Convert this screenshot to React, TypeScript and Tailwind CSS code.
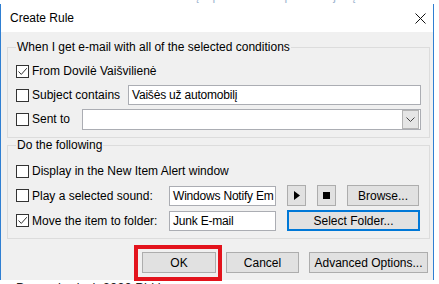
import React from 'react';

const font = { fontFamily: '"Liberation Sans", Arial, sans-serif' };

function Check({ on }: { on?: boolean }) {
  return (
    <span className="w-[13px] h-[13px] shrink-0 border border-[#333333] bg-white flex items-center justify-center">
      {on && (
        <svg width="11" height="11" viewBox="0 0 11 11" fill="none" aria-hidden>
          <path d="M1.5 5.5 L4.3 8.4 L9.8 2.2" stroke="#333" strokeWidth="1" />
        </svg>
      )}
    </span>
  );
}

function Field({ className, children }: { className: string; children?: React.ReactNode }) {
  return (
    <div className={`h-[20px] border border-[#abadb3] bg-white flex items-center px-[3px] text-[12px] tracking-[-0.2px] text-black whitespace-nowrap overflow-hidden ${className}`}>
      {children}
    </div>
  );
}

function Btn({ className, children, focus }: { className: string; children?: React.ReactNode; focus?: boolean }) {
  return (
    <button
      className={`h-[21px] bg-[#e1e1e1] flex items-center justify-center text-[12px] text-black ${
        focus ? 'border-2 border-[#0078d7]' : 'border border-[#adadad]'
      } ${className}`}
    >
      {children}
    </button>
  );
}

export default function App() {
  return (
    <div className="w-[439px] h-[284px] bg-white overflow-hidden flex flex-col" style={font}>
      {/* window behind the dialog */}
      <div className="h-[4px] overflow-hidden">
        <div className="-mt-[10px] ml-[90px] text-[12px] leading-[12px] text-[#9db4cf] whitespace-nowrap">
          Vaišės už automobilį – pranešimas apie mokėjimą
        </div>
      </div>

      <div className="w-[434px] h-[276px] border-x border-[#2f7fd2] bg-[#f0f0f0] flex flex-col">
        {/* title bar */}
        <div className="h-[28px] bg-white flex items-center justify-between pl-[9px] pr-[7px]">
          <span className="text-[12px] text-black">Create Rule</span>
          <svg width="11" height="11" viewBox="0 0 11 11" aria-hidden>
            <path d="M0.5 0.5 L10.5 10.5 M10.5 0.5 L0.5 10.5" stroke="#111" strokeWidth="1" />
          </svg>
        </div>

        <div className="flex flex-col pl-[6px] pr-[3px] text-[12px] text-black">
          {/* conditions */}
          <fieldset className="mt-[7px] border border-[#dcdcdc] px-[8px] pb-[6px]">
            <legend className="px-[1px] leading-[16px]">When I get e-mail with all of the selected conditions</legend>
            <div className="h-[24px] mt-[4px] flex items-center gap-[3px]">
              <Check on />
              <span>From Dovilė Vaišvilienė</span>
            </div>
            <div className="h-[24px] flex items-center">
              <Check />
              <span className="ml-[3px] w-[96px]">Subject contains</span>
              <Field className="flex-1">Vaišės už automobilį</Field>
            </div>
            <div className="h-[24px] flex items-center">
              <Check />
              <span className="ml-[3px] w-[50px]">Sent to</span>
              <div className="flex-1 h-[21px] border border-[#abadb3] bg-white flex justify-end items-center pr-[1px]">
                <span className="w-[17px] h-[19px] bg-[#e5e5e5] border border-[#b4b4b4] flex items-center justify-center">
                  <svg width="9" height="5" viewBox="0 0 9 5" fill="none" aria-hidden>
                    <path d="M0.5 0.5 L4.5 4.5 L8.5 0.5" stroke="#444" strokeWidth="1" />
                  </svg>
                </span>
              </div>
            </div>
          </fieldset>

          {/* actions */}
          <fieldset className="-mt-[1px] border border-[#dcdcdc] pl-[8px] pr-[9px] pb-[5px]">
            <legend className="px-[1px] leading-[16px]">Do the following</legend>
            <div className="h-[24px] mt-[6px] flex items-center gap-[3px]">
              <Check />
              <span>Display in the New Item Alert window</span>
            </div>
            <div className="h-[25px] flex items-center">
              <Check />
              <span className="ml-[3px] w-[137px]">Play a selected sound:</span>
              <Field className="w-[107px]">Windows Notify Em</Field>
              <Btn className="w-[19px] ml-[11px]">
                <svg width="6" height="9" viewBox="0 0 6 9" aria-hidden>
                  <path d="M0 0 L6 4.5 L0 9 Z" fill="#000" />
                </svg>
              </Btn>
              <Btn className="w-[19px] ml-[11px]">
                <span className="w-[7px] h-[7px] bg-black" />
              </Btn>
              <Btn className="w-[72px] ml-[11px]">Browse...</Btn>
            </div>
            <div className="h-[25px] flex items-center">
              <Check on />
              <span className="ml-[3px] w-[137px]">Move the item to folder:</span>
              <Field className="w-[107px]">Junk E-mail</Field>
              <Btn focus className="flex-1 ml-[11px]">Select Folder...</Btn>
            </div>
          </fieldset>

          {/* dialog buttons */}
          <div className="mt-[13px] flex justify-end gap-[10px] pr-[2px]">
            <div className="relative">
              <Btn className="w-[74px]">OK</Btn>
              <div className="absolute -left-[8px] -right-[6px] -top-[7px] -bottom-[8px] border-[4px] border-[#e3131c]" />
            </div>
            <Btn className="w-[73px]">Cancel</Btn>
            <Btn className="w-[119px]">Advanced Options...</Btn>
          </div>
        </div>
      </div>

      {/* window behind, below the dialog */}
      <div className="h-[4px] overflow-hidden">
        <div className="mt-[1px] ml-[16px] text-[13px] leading-[14px] text-[#222] whitespace-nowrap">
          Dragoslavė el. 2020 Pirkimas
        </div>
      </div>
    </div>
  );
}
